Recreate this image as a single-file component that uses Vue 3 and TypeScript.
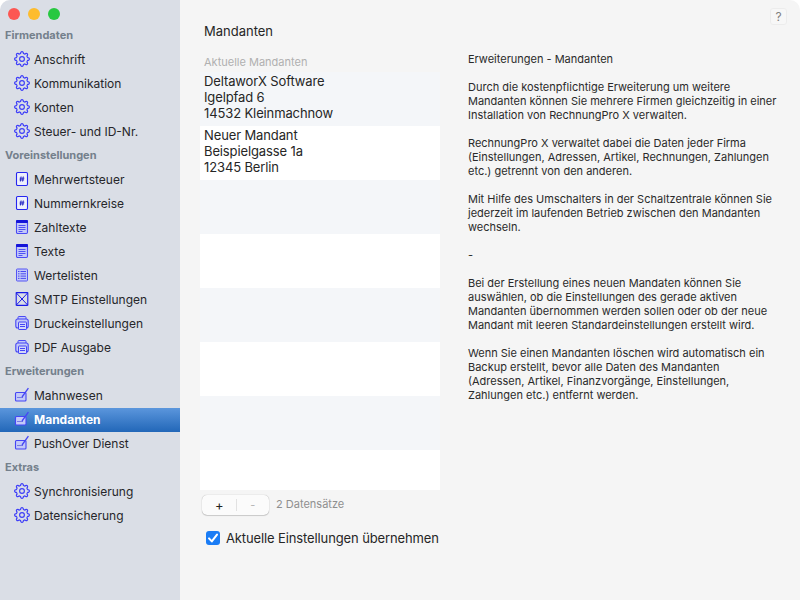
<script setup lang="ts">
type Icon = 'gear' | 'hash' | 'doc' | 'list' | 'mail' | 'print' | 'edit'
interface Item { label: string; icon: Icon; active?: boolean }
interface Section { title: string; items: Item[] }

const sections: Section[] = [
  { title: 'Firmendaten', items: [
    { label: 'Anschrift', icon: 'gear' },
    { label: 'Kommunikation', icon: 'gear' },
    { label: 'Konten', icon: 'gear' },
    { label: 'Steuer- und ID-Nr.', icon: 'gear' },
  ] },
  { title: 'Voreinstellungen', items: [
    { label: 'Mehrwertsteuer', icon: 'hash' },
    { label: 'Nummernkreise', icon: 'hash' },
    { label: 'Zahltexte', icon: 'doc' },
    { label: 'Texte', icon: 'doc' },
    { label: 'Wertelisten', icon: 'list' },
    { label: 'SMTP Einstellungen', icon: 'mail' },
    { label: 'Druckeinstellungen', icon: 'print' },
    { label: 'PDF Ausgabe', icon: 'print' },
  ] },
  { title: 'Erweiterungen', items: [
    { label: 'Mahnwesen', icon: 'edit' },
    { label: 'Mandanten', icon: 'edit', active: true },
    { label: 'PushOver Dienst', icon: 'edit' },
  ] },
  { title: 'Extras', items: [
    { label: 'Synchronisierung', icon: 'gear' },
    { label: 'Datensicherung', icon: 'gear' },
  ] },
]

const rows: string[][] = [
  ['DeltaworX Software', 'Igelpfad 6', '14532 Kleinmachnow'],
  ['Neuer Mandant', 'Beispielgasse 1a', '12345 Berlin'],
  [], [], [], [], [], [],
]

const paragraphs: string[] = [
  'Erweiterungen - Mandanten',
  'Durch die kostenpflichtige Erweiterung um weitere Mandanten können Sie mehrere Firmen gleichzeitig in einer Installation von RechnungPro X verwalten.',
  'RechnungPro X verwaltet dabei die Daten jeder Firma (Einstellungen, Adressen, Artikel, Rechnungen, Zahlungen etc.) getrennt von den anderen.',
  'Mit Hilfe des Umschalters in der Schaltzentrale können Sie jederzeit im laufenden Betrieb zwischen den Mandanten wechseln.',
  '-',
  'Bei der Erstellung eines neuen Mandaten können Sie auswählen, ob die Einstellungen des gerade aktiven Mandanten übernommen werden sollen oder ob der neue Mandant mit leeren Standardeinstellungen erstellt wird.',
  'Wenn Sie einen Mandanten löschen wird automatisch ein Backup erstellt, bevor alle Daten des Mandanten (Adressen, Artikel, Finanzvorgänge, Einstellungen, Zahlungen etc.) entfernt werden.',
]

function gearPath(): string {
  const n = 8
  const pts: string[] = []
  const pt = (r: number, a: number) => `${(8 + r * Math.cos(a)).toFixed(2)} ${(8 + r * Math.sin(a)).toFixed(2)}`
  for (let i = 0; i < n; i++) {
    const a = (i * 2 * Math.PI) / n - Math.PI / 2
    const w = Math.PI / n
    const start = pt(5.7, a - w * 0.62)
    const c1 = pt(8.2, a - w * 0.5)
    const c2 = pt(8.2, a + w * 0.5)
    const end = pt(5.7, a + w * 0.62)
    pts.push(`${i === 0 ? 'M' : 'L'}${start}C${c1} ${c2} ${end}`)
  }
  return pts.join('') + 'Z'
}
const gear = gearPath()
</script>

<template>
  <div class="window">
    <aside class="sidebar">
      <div class="lights">
        <span class="light red"></span>
        <span class="light yellow"></span>
        <span class="light green"></span>
      </div>
      <template v-for="s in sections" :key="s.title">
        <div class="section">{{ s.title }}</div>
        <div v-for="it in s.items" :key="it.label" class="item" :class="{ active: it.active }">
          <svg class="icon" viewBox="0 0 16 16" fill="none" stroke="#3e3ef8" stroke-width="1">
            <template v-if="it.icon === 'gear'">
              <path :d="gear" stroke-width="1.15" stroke-linejoin="round" />
              <circle cx="8" cy="8" r="2.4" stroke-width="1.15" />
            </template>
            <template v-else-if="it.icon === 'hash'">
              <rect x="2.5" y="1.5" width="11" height="13" rx="1.2" stroke-width="1.1" fill="#eef0fb" stroke="#2626f0" />
              <path d="M7.1 5.5l-.7 5M9.3 5.5l-.7 5M5.7 7.2h4.6M5.5 8.9h4.6" stroke="#1c1cc0" stroke-width=".9" />
            </template>
            <template v-else-if="it.icon === 'doc'">
              <rect x="2.5" y="1.5" width="11" height="13" rx="1.2" fill="#c3c9f8" stroke="#4a4af5" stroke-width="1.1" />
              <rect x="2" y="1" width="12" height="3" rx="1" fill="#1515d8" stroke="none" />
              <path d="M4.5 6.5h7M4.5 8.5h7M4.5 10.5h7M4.5 12.5h4" stroke="#5050f5" />
            </template>
            <template v-else-if="it.icon === 'list'">
              <rect x="2.5" y="2" width="11" height="12" rx=".8" fill="#c3c9f8" stroke="#5555f5" />
              <path d="M4 4.5h1.5M6.5 4.5H12M4 6.8h1.5M6.5 6.8H12M4 9.1h1.5M6.5 9.1H12M4 11.4h1.5M6.5 11.4H12" stroke="#4a4af0" />
            </template>
            <template v-else-if="it.icon === 'mail'">
              <rect x="2.2" y="1.6" width="11.6" height="12.8" rx=".6" stroke="#1a1ae8" stroke-width="1.1" />
              <path d="M2.2 1.8L8 8l5.8-6.2M2.2 14.2L8 8l5.8 6.2" stroke="#1a1ae8" stroke-width="1" />
            </template>
            <template v-else-if="it.icon === 'print'">
              <rect x="4" y="1.5" width="8" height="4" rx="1" fill="#c3c9f8" stroke="#4a4af5" />
              <rect x="1.8" y="4" width="12.4" height="9" rx="2" fill="#c3c9f8" stroke="#4545f5" stroke-width="1.1" />
              <rect x="4.5" y="7" width="8" height="7.5" rx=".6" fill="#d3d7f9" stroke="#4545f5" />
              <path d="M6 9.5h5M6 11.5h5" stroke="#4545f5" />
            </template>
            <template v-else>
              <rect x="1.5" y="5.5" width="10.5" height="8.5" rx="1" fill="#c3c9f8" stroke="#4545f5" stroke-width="1.1" />
              <path d="M8 10L14.4 1.2" stroke="#4545f5" stroke-width="1.3" />
              <path d="M3.5 10.5h1M5.5 10.5h1M7.5 10.5h1" stroke="#2a2ad0" />
            </template>
          </svg>
          <span>{{ it.label }}</span>
        </div>
      </template>
    </aside>

    <main class="main">
      <button class="help">?</button>
      <div class="left">
        <h1 class="title">Mandanten</h1>
        <div class="list-label">Aktuelle Mandanten</div>
        <div class="list">
          <div v-for="(r, i) in rows" :key="i" class="row">
            <div v-for="line in r" :key="line">{{ line }}</div>
          </div>
        </div>
        <div class="tools">
          <div class="segment">
            <span class="seg plus">+</span>
            <span class="divider"></span>
            <span class="seg minus">-</span>
          </div>
          <span class="count">2 Datensätze</span>
        </div>
        <label class="check">
          <span class="box">
            <svg viewBox="0 0 14 14" width="14" height="14" fill="none" stroke="#fff" stroke-width="2" stroke-linecap="round" stroke-linejoin="round">
              <path d="M3 7.4l2.8 3L11 3.6" />
            </svg>
          </span>
          <span>Aktuelle Einstellungen übernehmen</span>
        </label>
      </div>
      <div class="info">
        <p v-for="(p, i) in paragraphs" :key="i">{{ p }}</p>
      </div>
    </main>
  </div>
</template>

<style>
html, body { margin: 0; background: #fff; }
</style>

<style scoped>
.window {
  width: 800px;
  height: 600px;
  display: flex;
  overflow: hidden;
  border-radius: 10px 10px 0 0;
  font-family: Inter, "Liberation Sans", sans-serif;
  color: #262626;
  background: #f5f5f5;
}
.sidebar {
  width: 180px;
  flex: none;
  padding-top: 24px;
  box-sizing: border-box;
  background: #dadee6;
  position: relative;
}
.lights {
  position: absolute;
  top: 8px;
  left: 8px;
  display: flex;
  gap: 8px;
}
.light { width: 12px; height: 12px; border-radius: 50%; }
.red { background: #fc5753; }
.yellow { background: #fdbc2e; }
.green { background: #27c840; }
.section {
  height: 24px;
  line-height: 22px;
  padding-left: 5px;
  font-size: 11px;
  font-weight: 700;
  color: #74808c;
}
.item {
  height: 24px;
  box-sizing: border-box;
  display: flex;
  align-items: center;
  padding: 0 0 2px 14px;
  gap: 4px;
  font-size: 12px;
  color: #26262a;
}
.item.active {
  background: linear-gradient(#5b96dc, #2267b8);
  color: #fff;
  font-weight: 700;
}
.icon { width: 16px; height: 16px; flex: none; }
.main {
  flex: 1;
  display: flex;
  position: relative;
  padding-left: 20px;
}
.help {
  position: absolute;
  top: 8px;
  right: 13px;
  width: 17px;
  height: 17px;
  padding: 0;
  border: 1px solid #ececec;
  border-radius: 3px;
  background: #f7f7f7;
  font: 12px Inter, sans-serif;
  color: #808080;
}
.left { width: 240px; flex: none; display: flex; flex-direction: column; }
.title {
  margin: 0;
  padding: 23px 0 0 4px;
  font-size: 13px;
  line-height: 16px;
  font-weight: 400;
  color: #262626;
}
.list-label {
  margin-top: 16px;
  padding-left: 4px;
  font-size: 11px;
  line-height: 14px;
  color: #b0b0b0;
}
.list {
  margin-top: 3px;
  height: 418px;
  overflow: hidden;
}
.row {
  height: 54px;
  box-sizing: border-box;
  padding: 1px 0 0 4px;
  font-size: 13px;
  line-height: 16px;
  letter-spacing: -.12px;
  background: #fff;
  color: #262626;
}
.row:nth-child(odd) { background: #f4f6f9; }
.tools {
  margin-top: 5px;
  display: flex;
  align-items: center;
  padding-left: 2px;
  gap: 7px;
}
.segment {
  width: 67px;
  height: 20px;
  display: flex;
  align-items: center;
  background: #fbfbfb;
  border-radius: 5px;
  box-shadow: 0 0 1px rgba(0,0,0,.35), 0 1px 1px rgba(0,0,0,.15);
}
.seg { flex: 1; text-align: center; font-size: 13px; line-height: 20px; }
.plus { color: #222; padding-left: 1px; }
.minus { color: #b5b5b5; font-size: 11px; }
.divider { width: 1px; height: 12px; background: #e2e2e2; }
.count { font-size: 11px; color: #8f8f8f; margin-top: -2px; }
.check {
  margin-top: 15px;
  padding-left: 6px;
  display: flex;
  align-items: center;
  gap: 6px;
  font-size: 13px;
  line-height: 16px;
  letter-spacing: -.12px;
  white-space: nowrap;
  color: #262626;
}
.box {
  width: 14px;
  height: 14px;
  border-radius: 3px;
  background: #1a7cf5;
  display: flex;
  flex: none;
}
.info {
  margin-left: 28px;
  width: 310.5px;
  padding-top: 52px;
  font-size: 11px;
  line-height: 14px;
  color: #2a2a2a;
}
.info p { margin: 0 0 14px; }
</style>
